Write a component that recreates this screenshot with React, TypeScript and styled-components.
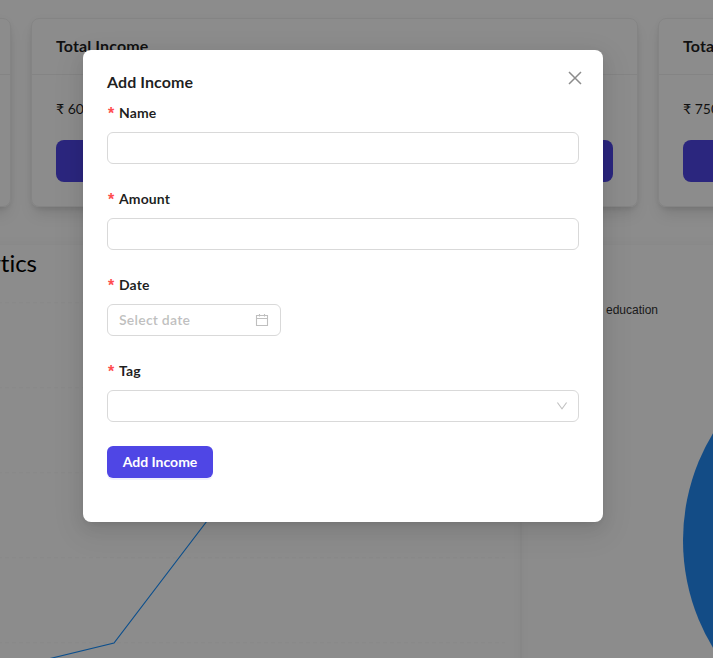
import React from "react";
import styled, { createGlobalStyle } from "styled-components";

const GlobalStyle = createGlobalStyle`
  * { box-sizing: border-box; }
  html, body { margin: 0; height: 100%; overflow: hidden; }
  body { background: #fff; font-family: Lato, "Noto Sans", sans-serif; color: rgba(0,0,0,.88); }
  h1, h2, h3, p { margin: 0; }
`;

const Page = styled.div`
  width: 713px;
  height: 658px;
  position: relative;
  overflow: hidden;
`;
const Summary = styled.div`
  display: grid;
  grid-template-columns: 607px 607px 607px;
  column-gap: 20px;
  margin: 18px 0 0 -596px;
  width: 1861px;
`;
const Card = styled.section`
  height: 189px;
  border: 1px solid #f0f0f0;
  border-radius: 8px;
  box-shadow: 0 10px 15px -3px rgba(0, 0, 0, 0.11), 0 3px 6px -2px rgba(0, 0, 0, 0.11),
    0 0 10px rgba(0, 0, 0, 0.02);
`;
const CardTitle = styled.h3`
  height: 56px;
  padding: 0 24px;
  border-bottom: 1px solid #f0f0f0;
  font-size: 16px;
  font-weight: 700;
  line-height: 54px;
  letter-spacing: 0.12px;
`;
const CardBody = styled.div`
  padding: 23px 24px;
  display: flex;
  flex-direction: column;
  gap: 20px;
`;
const Balance = styled.p`
  font-size: 14px;
  line-height: 22px;
`;
const CardAction = styled.div`
  height: 42px;
  border-radius: 8px;
  background: #4f46e5;
`;
const Charts = styled.div`
  display: grid;
  grid-template-columns: 620px 500px;
  column-gap: 2px;
  margin: 38px 0 0 -100px;
  width: 1122px;
`;
const Panel = styled.section`
  height: 520px;
  box-shadow: 0 0 12px rgba(0, 0, 0, 0.045);
`;
const ChartTitle = styled.h2`
  display: flex;
  justify-content: flex-end;
  width: 137px;
  height: 38px;
  font-size: 24px;
  font-weight: 400;
  line-height: 36px;
  font-variant-ligatures: none;
  color: #000;
  white-space: nowrap;
`;
const Plot = styled.svg`
  display: block;
`;

const Mask = styled.div`
  position: absolute;
  inset: 0;
  padding: 50px 110px 0 83px;
  background: rgba(0, 0, 0, 0.45);
`;
const Dialog = styled.div`
  position: relative;
  height: 472px;
  padding: 20px 24px;
  border-radius: 8px;
  background: #fff;
  box-shadow: 0 6px 16px 0 rgba(0, 0, 0, 0.08), 0 3px 6px -4px rgba(0, 0, 0, 0.12),
    0 9px 28px 8px rgba(0, 0, 0, 0.05);
`;
const DialogTitle = styled.h1`
  font-size: 16px;
  font-weight: 700;
  line-height: 24px;
  letter-spacing: 0.08px;
`;
const Close = styled.button`
  position: absolute;
  top: 17px;
  right: 17px;
  width: 22px;
  height: 22px;
  padding: 0;
  border: 0;
  background: none;
  display: grid;
  place-items: center;
`;
const Form = styled.form`
  padding-top: 8px;
`;
const Field = styled.div`
  height: 86px;
`;
const Label = styled.label`
  display: flex;
  height: 22px;
  margin-bottom: 8px;
  font-size: 14px;
  font-weight: 700;
  line-height: 22px;
  letter-spacing: 0.1px;
`;
const Required = styled.span`
  width: 12px;
  padding-left: 1px;
  color: #ff4d4f;
  font: 700 16px/24px "Liberation Sans", sans-serif;
`;
const Control = styled.div<{ $width: number }>`
  display: flex;
  align-items: center;
  justify-content: space-between;
  width: ${(p) => p.$width}px;
  height: 32px;
  padding: 0 11px;
  border: 1px solid #d9d9d9;
  border-radius: 6px;
`;
const Placeholder = styled.span`
  color: rgba(0, 0, 0, 0.25);
  font-size: 14px;
  font-weight: 700;
  line-height: 30px;
  height: 30px;
  letter-spacing: 0.2px;
`;
const ControlIcon = styled.svg`
  color: rgba(0, 0, 0, 0.25);
`;
const Caret = styled(ControlIcon)`
  margin-left: auto;
  margin-right: -1px;
`;
const Submit = styled.button`
  display: block;
  width: 106px;
  height: 32px;
  padding: 0;
  border: 0;
  border-radius: 6px;
  background: #4f46e5;
  box-shadow: 0 2px 0 rgba(79, 70, 229, 0.08);
  color: #fff;
  font: 700 14px/32px Lato, sans-serif;
`;

const balances = [
  { title: "", amount: "" },
  { title: "Total Income", amount: "₹ 6000" },
  { title: "Total Expenses", amount: "₹ 7500" },
];
const gridLines = [302.8, 387.8, 472.8, 557.8, 642.8];

export default function App() {
  return (
    <>
      <GlobalStyle />
      <Page>
        <Summary>
          {balances.map((b, i) => (
            <Card key={i}>
              <CardTitle>{b.title}</CardTitle>
              <CardBody>
                <Balance>{b.amount || "\u00a0"}</Balance>
                <CardAction />
              </CardBody>
            </Card>
          ))}
        </Summary>
        <Charts>
          <Panel>
            <ChartTitle>Financial Analytics</ChartTitle>
            <Plot width="620" height="375" viewBox="-100 283 620 375">
              {gridLines.map((y) => (
                <line key={y} x1="-100" x2="505" y1={y} y2={y} stroke="#000" strokeOpacity=".035" strokeDasharray="4 3" />
              ))}
              <path d="M-30 677L50 658.500L114 643L207 521" fill="none" stroke="#1890ff" strokeWidth="1.2" />
            </Plot>
          </Panel>
          <Panel>
            <Plot width="500" height="480" viewBox="522 245 500 480">
              <text x="606" y="314" fontFamily="Liberation Sans, sans-serif" fontSize="12" fill="#333">education</text>
              <circle cx="890" cy="540.5" r="207" fill="#248bf5" />
            </Plot>
          </Panel>
        </Charts>
        <Mask>
          <Dialog role="dialog">
            <DialogTitle>Add Income</DialogTitle>
            <Close type="button" aria-label="Close">
              <svg width="14" height="14" viewBox="0 0 14 14" fill="none" stroke="#8c8c8c" strokeWidth="1.5">
                <path d="M1 1L13 13M13 1L1 13" />
              </svg>
            </Close>
            <Form>
              <Field>
                <Label><Required>*</Required>Name</Label>
                <Control $width={472} />
              </Field>
              <Field>
                <Label><Required>*</Required>Amount</Label>
                <Control $width={472} />
              </Field>
              <Field>
                <Label><Required>*</Required>Date</Label>
                <Control $width={174}>
                  <Placeholder>Select date</Placeholder>
                  <ControlIcon width="14" height="14" viewBox="0 0 14 14" fill="none" stroke="currentColor">
                    <path d="M1.500 2.500H12.500V12.500H1.500ZM1.500 5.500H12.500M4.500 1V3.500M9.500 1V3.500" strokeWidth="1.1" />
                  </ControlIcon>
                </Control>
              </Field>
              <Field>
                <Label><Required>*</Required>Tag</Label>
                <Control $width={472}>
                  <Caret width="12" height="12" viewBox="64 64 896 896" fill="currentColor">
                    <path d="M884 256h-75c-5.100 0-9.900 2.500-12.900 6.600L512 654.200 227.900 262.600c-3-4.100-7.800-6.600-12.900-6.600h-75c-6.500 0-10.300 7.400-6.500 12.700l352.600 486.100c12.800 17.600 39 17.600 51.700 0l352.600-486.100c3.900-5.300.1-12.700-6.400-12.700z" />
                  </Caret>
                </Control>
              </Field>
              <Submit type="button">Add Income</Submit>
            </Form>
          </Dialog>
        </Mask>
      </Page>
    </>
  );
}
